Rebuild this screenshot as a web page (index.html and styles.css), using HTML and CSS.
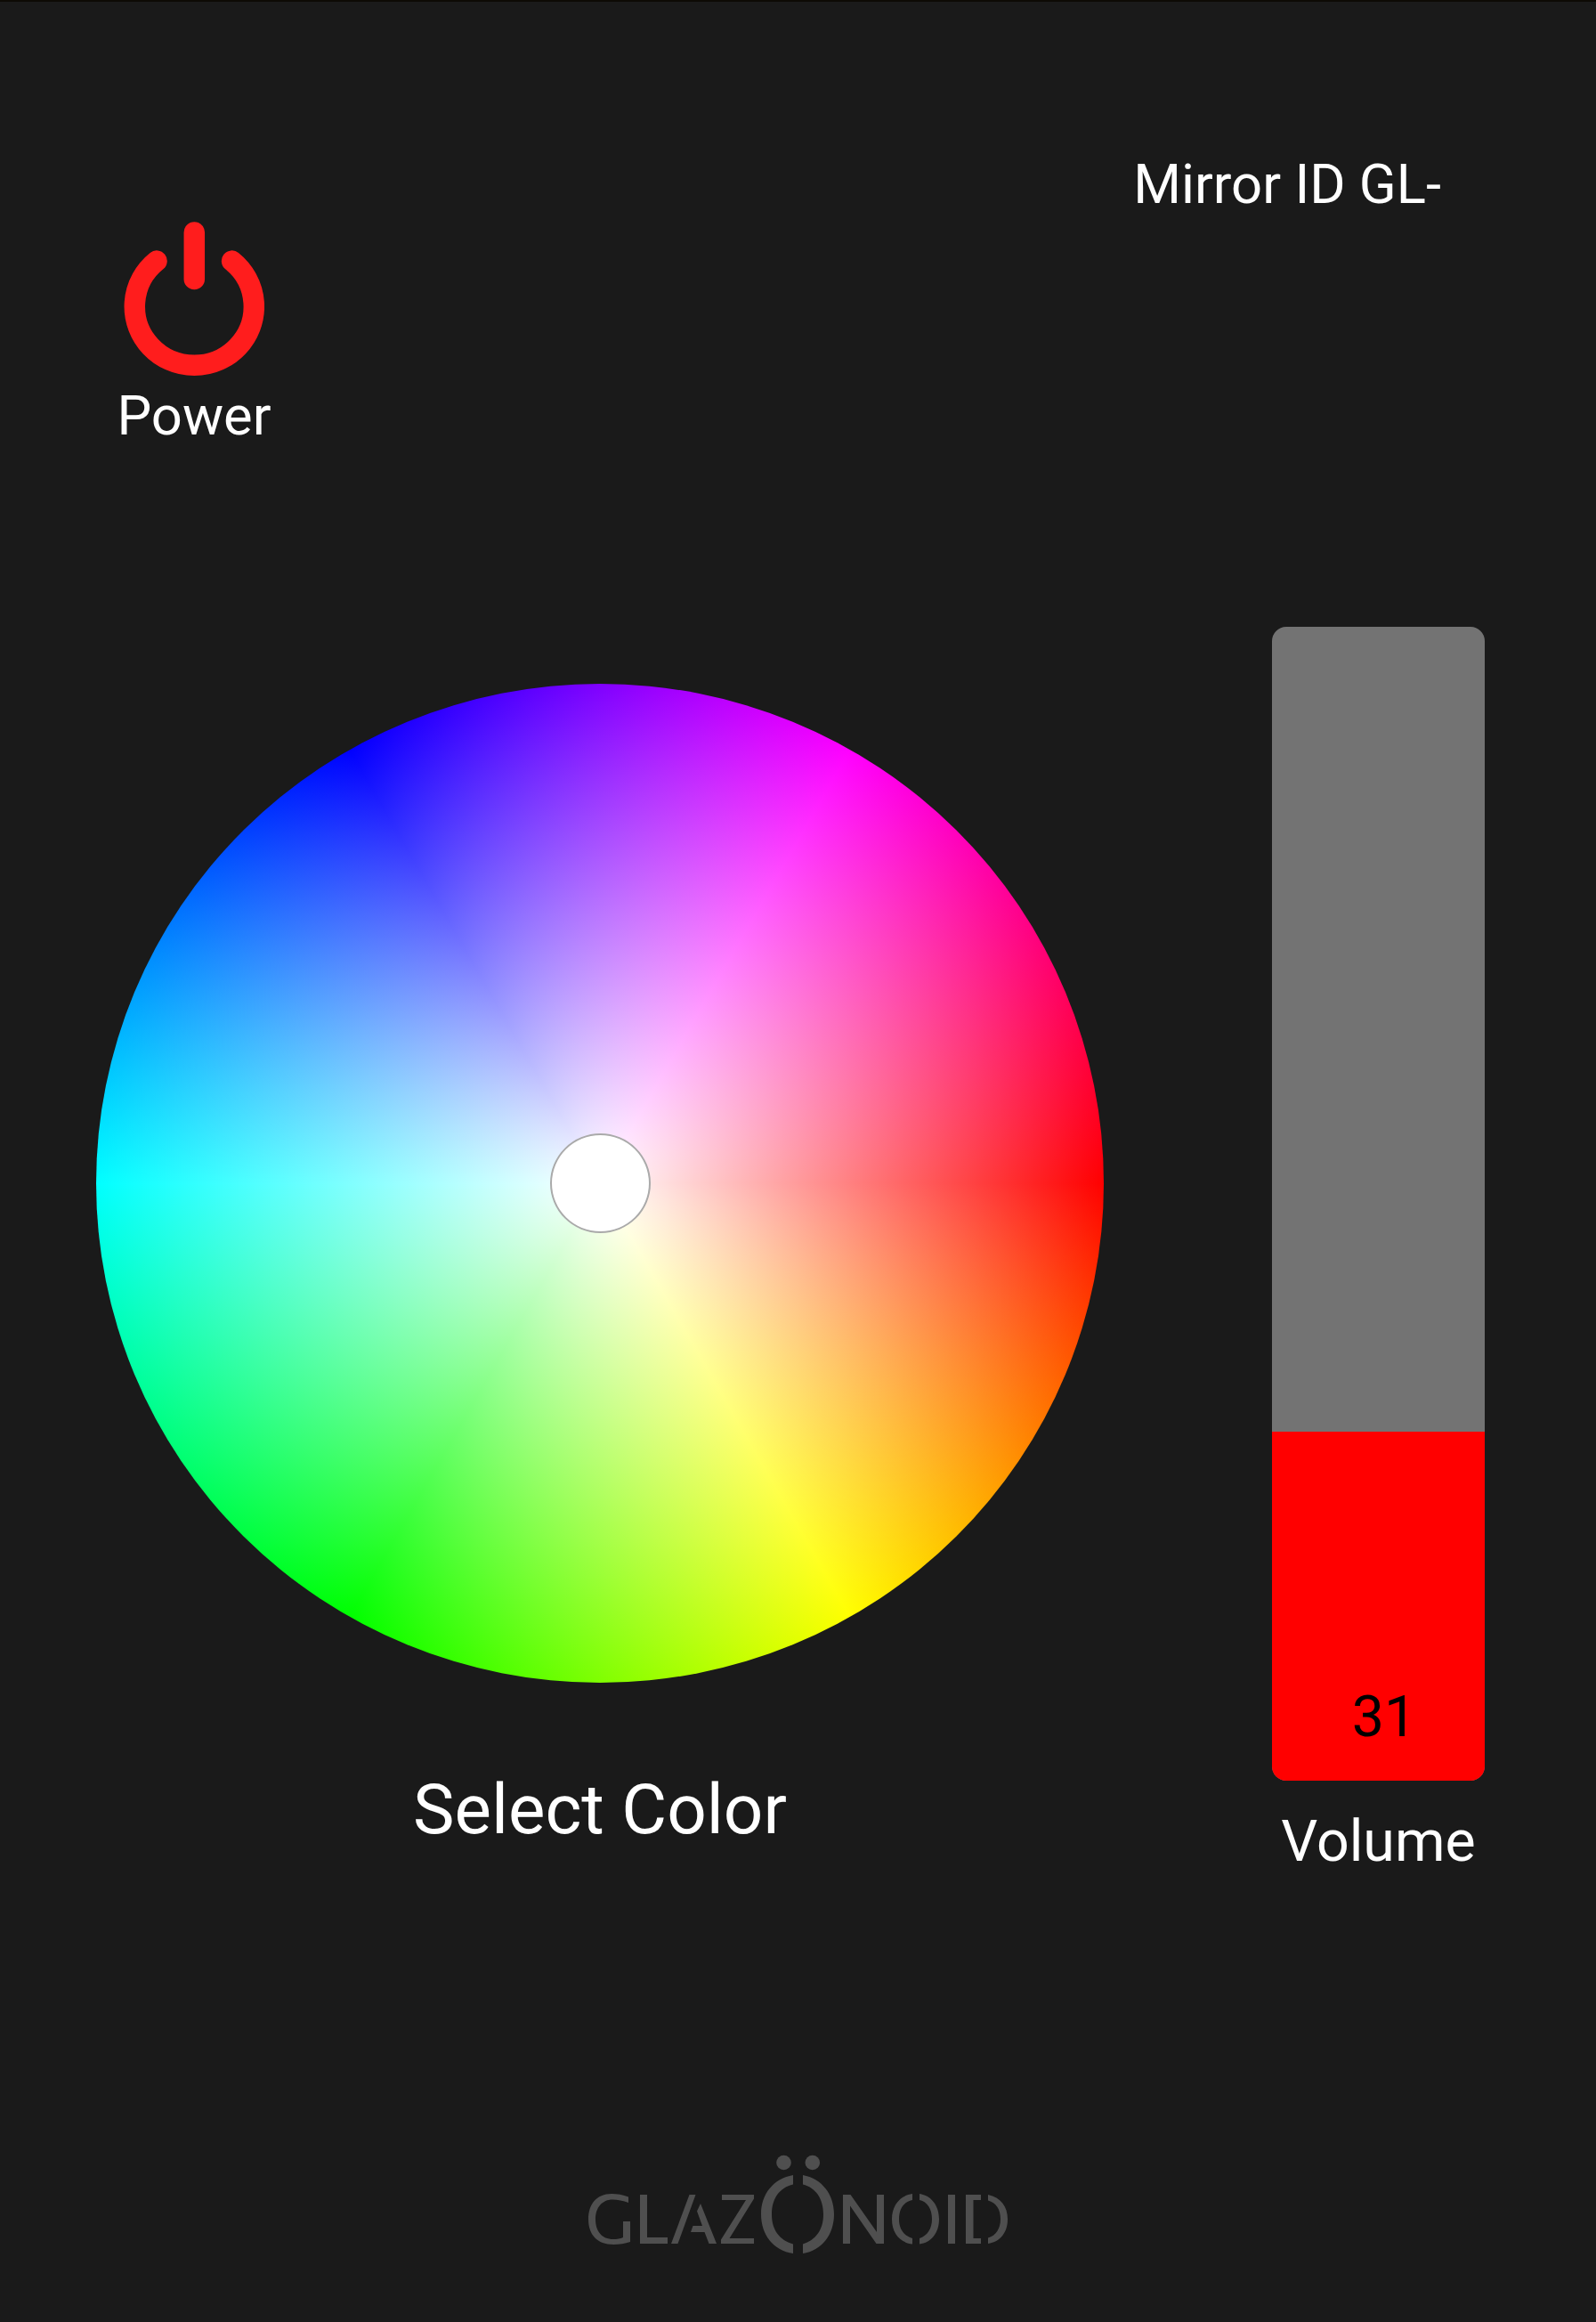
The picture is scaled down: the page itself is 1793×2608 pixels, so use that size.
FILE: index.html
```html
<!DOCTYPE html>
<html lang="en">
<head>
<meta charset="utf-8">
<title>Glazonoid</title>
<link rel="stylesheet" href="styles.css">
</head>
<body>
<header class="top">
  <button class="power">
    <svg class="power-icon" width="158" height="174" viewBox="0 0 158 174" fill="none" stroke="#ff1d1d" stroke-width="23.5" stroke-linecap="round">
      <path d="M79.300 12V64.500"/>
      <path d="M37 44.100A67 66 0 1 0 121.600 44.100"/>
    </svg>
    <span>Power</span>
  </button>
  <div class="mirror">Mirror ID GL-</div>
</header>
<main class="controls">
  <section class="picker">
    <div class="wheel"><div class="thumb"></div></div>
    <h1 class="picker-label">Select Color</h1>
  </section>
  <section class="volume">
    <div class="track"><div class="fill" style="height:392px">31</div></div>
    <div class="volume-label">Volume</div>
  </section>
</main>
<footer class="brand">
  <svg width="473" height="112" viewBox="660 2420 473 112" fill="#4f4f4f" role="img" aria-label="Glazonoid">
    <path d="M706 2467.500C700 2465 693 2464 687 2464C670 2464 661 2476 661 2492.500C661 2510 671 2521 689 2521C696 2521 702 2520 708 2518V2495H700V2513C697 2514.500 693 2515 689 2515C676 2515 669 2506 669 2492.500C669 2479 677 2470.500 688 2470.500C694 2470.500 700 2472 706 2474Z"/>
    <path d="M719 2465H727V2513H750V2520H719Z"/>
    <path d="M774.500 2465H781.500L761.500 2520H754Z"/>
    <path d="M787 2475L805 2520H796.500L791.500 2507H776L778.500 2500H789L783 2483.500Z"/>
    <path d="M811 2465H847V2469.500L819.500 2514H847V2520H810V2515.500L838 2471H811Z"/>
    <circle cx="880.500" cy="2429" r="8.300"/><circle cx="912.800" cy="2429" r="8.300"/>
    <path d="M891 2443C869 2447 855 2464 855 2487C855 2510 869 2528 891 2531V2520.500C876 2516 867 2505 867 2487C867 2469 876 2457 891 2453.500Z"/>
    <path d="M902 2443C923 2447 937 2464 937 2487C937 2510 923 2528 902 2531V2520.500C916 2516 925 2505 925 2487C925 2469 916 2457 902 2453.500Z"/>
    <path d="M947 2465H955.500L985 2507V2465H993V2520H984.500L955 2477.500V2520H947Z"/>
    <path d="M1025 2464C1011 2466 1002 2477 1002 2492.500C1002 2508 1011 2519 1025 2520.500V2514C1015 2511 1010 2503 1010 2492.500C1010 2481 1015 2473 1025 2471Z"/>
    <path d="M1033 2464C1046 2466 1055 2477 1055 2492.500C1055 2508 1046 2519 1033 2520.500V2514C1042 2511 1047 2503 1047 2492.500C1047 2481 1042 2473 1033 2471Z"/>
    <path d="M1065 2465H1073V2520H1065Z"/>
    <path d="M1085 2465H1102V2471H1093.500V2514H1102V2520H1085Z"/>
    <path d="M1110 2465C1124 2468 1132 2478 1132 2492.500C1132 2507 1124 2518 1110 2520V2513.500C1119 2511 1124 2503 1124 2492.500C1124 2481 1119 2474 1110 2471.500Z"/>
  </svg>
</footer>
</body>
</html>
```
FILE: styles.css
```css
* { box-sizing: border-box; }
body {
  margin: 0;
  width: 1793px;
  height: 2608px;
  overflow: hidden;
  background: #1a1a1a;
  border-top: 2px solid #0d0a05;
  color: #fff;
  font-family: Roboto, sans-serif;
  display: flex;
  flex-direction: column;
}
.top {
  height: 701px;
  padding: 0 174px 0 118px;
  display: flex;
  justify-content: space-between;
  align-items: flex-start;
}
.power {
  width: 200px;
  margin-top: 247px;
  padding: 0;
  border: 0;
  background: none;
  color: inherit;
  font: 400 61.500px/72px Roboto, sans-serif;
  display: flex;
  flex-direction: column;
  align-items: center;
}
.power span { margin-top: 8px; }
.mirror {
  margin-top: 169px;
  font-size: 61.600px;
  line-height: 72px;
  white-space: nowrap;
}
.controls {
  height: 1717px;
  padding: 0 125px 0 108px;
  display: flex;
  justify-content: space-between;
}
.picker {
  padding-top: 65px;
  text-align: center;
}
.wheel {
  width: 1132px;
  height: 1122px;
  border-radius: 50%;
  background:
    radial-gradient(closest-side, #fff, rgba(255,255,255,0)),
    conic-gradient(from 90deg, #f00, #ff0, #0f0, #0ff, #00f, #f0f, #f00);
  display: flex;
  align-items: center;
  justify-content: center;
}
.thumb {
  width: 113px;
  height: 112px;
  border-radius: 50%;
  background: #fff;
  border: 2px solid #aaa;
}
.picker-label {
  margin: 96px 0 0;
  font-weight: 400;
  font-size: 78.200px;
  line-height: 92px;
}
.volume {
  width: 239px;
  padding-top: 1px;
  text-align: center;
}
.track {
  height: 1296px;
  border-radius: 16px;
  overflow: hidden;
  background: #737373;
  display: flex;
  flex-direction: column;
  justify-content: flex-end;
}
.fill {
  padding: 0 0 34px 13px;
  background: #f00;
  color: #000;
  font-size: 64.500px;
  line-height: 76px;
  display: flex;
  align-items: flex-end;
  justify-content: center;
}
.volume-label {
  margin-top: 30px;
  font-size: 64.500px;
  line-height: 76px;
}
.brand {
  height: 112px;
  padding-left: 660px;
  display: flex;
}
```
